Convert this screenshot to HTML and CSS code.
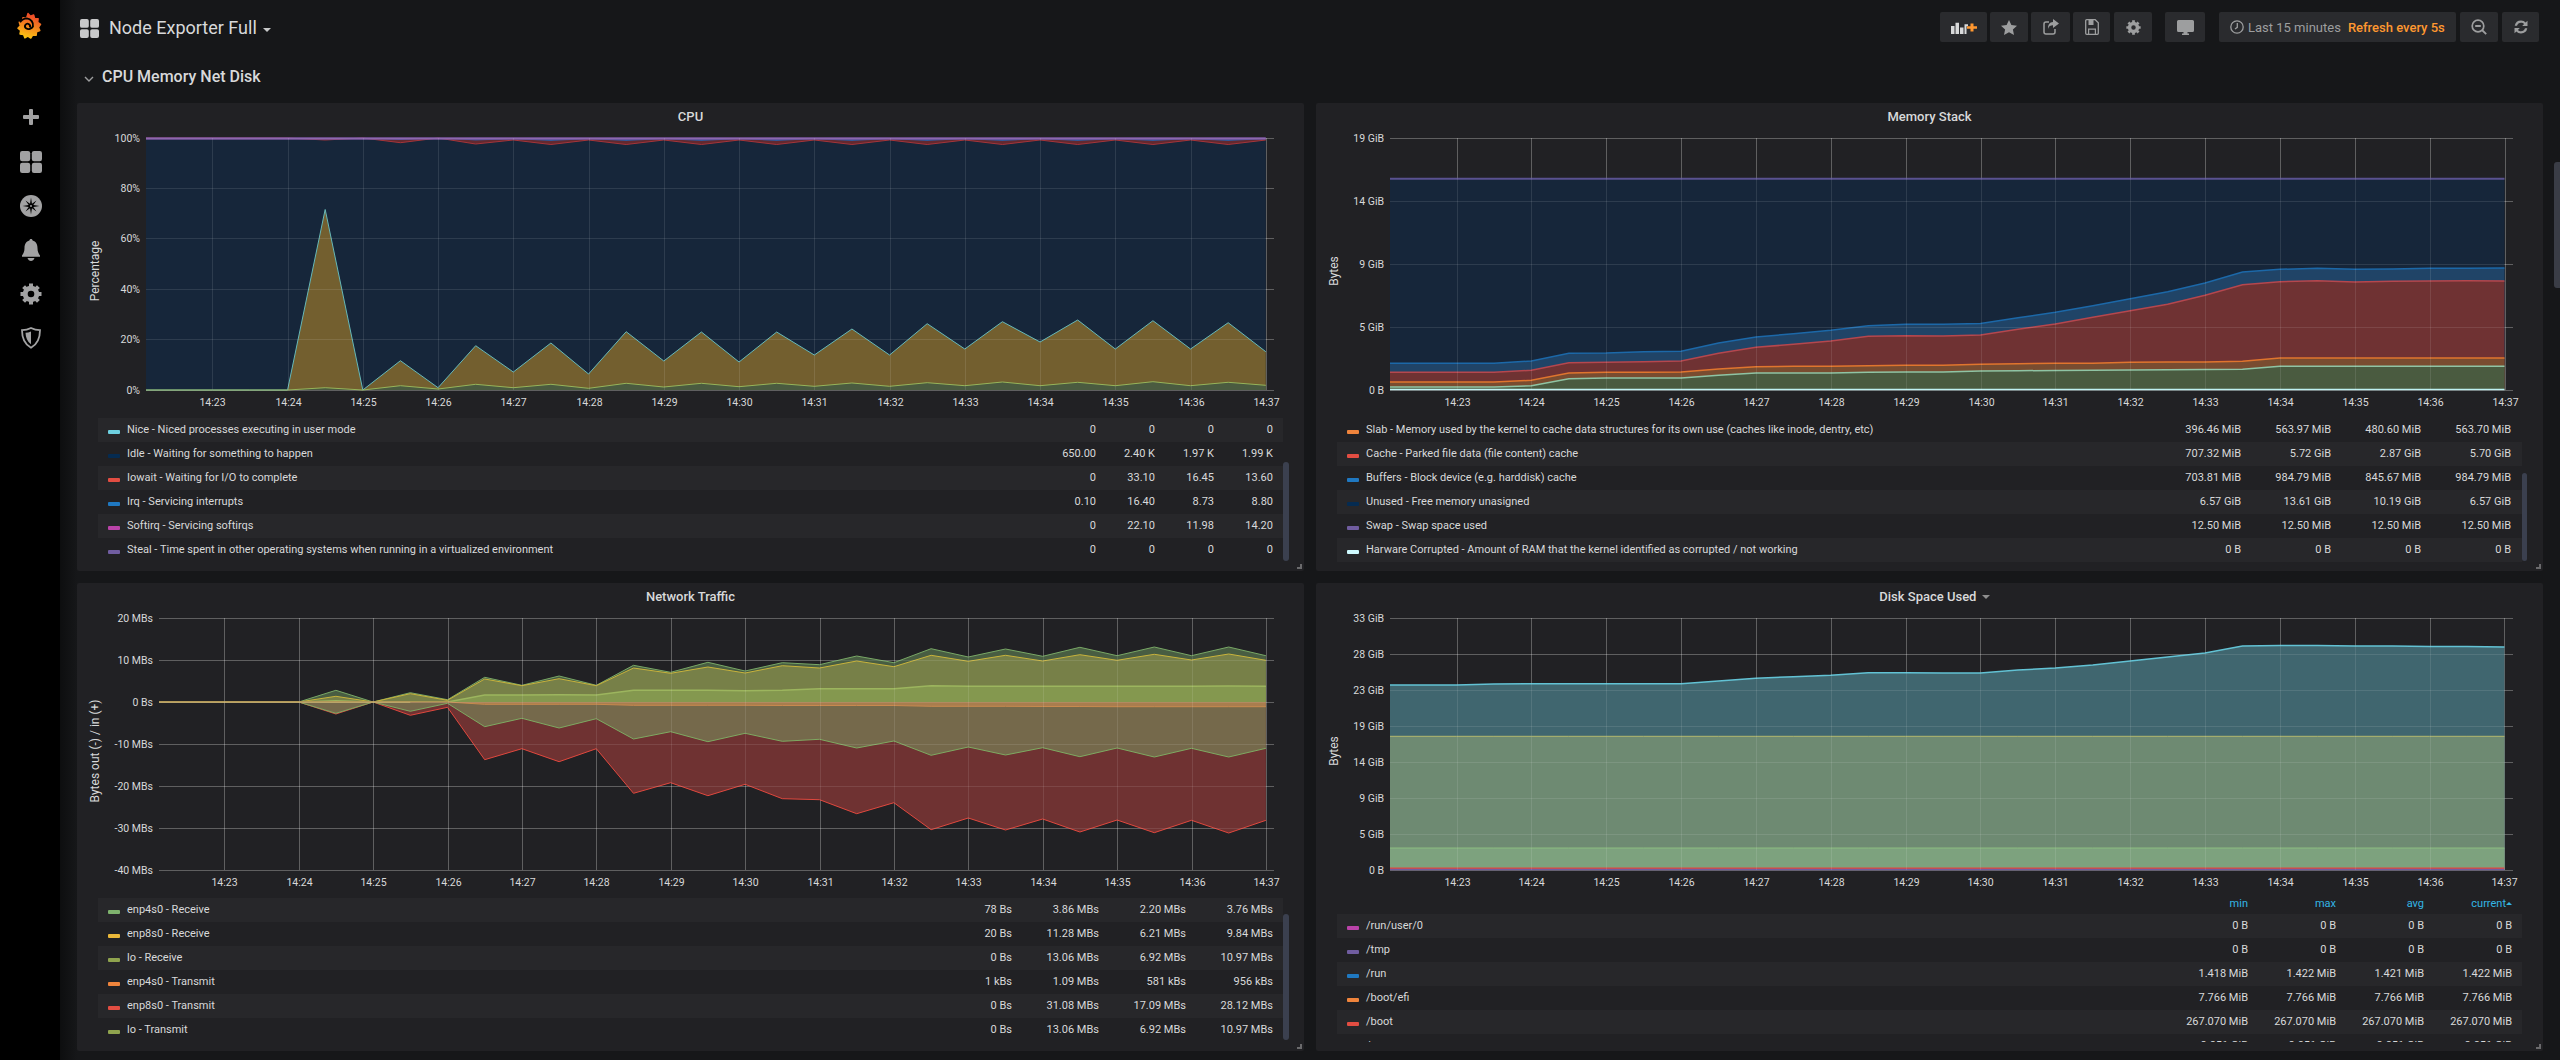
FILE: index.html
```html
<!DOCTYPE html>
<html lang="en">
<head>
<meta charset="utf-8">
<title>Node Exporter Full - Grafana</title>
<link rel="stylesheet" href="styles.css">
</head>
<body>
<svg class="defs" width="0" height="0" aria-hidden="true">
  <defs>
    <linearGradient id="logo-grad" x1="0" y1="1" x2="0.3" y2="0">
      <stop offset="0" stop-color="#fcd20f"/>
      <stop offset="1" stop-color="#ef4e28"/>
    </linearGradient>
    <symbol id="i-grid" viewBox="0 0 22 22"><rect x="0" y="0" width="10.2" height="10.2" rx="2.2"/><rect x="11.8" y="0" width="10.2" height="10.2" rx="2.2"/><rect x="0" y="11.8" width="10.2" height="10.2" rx="2.2"/><rect x="11.8" y="11.8" width="10.2" height="10.2" rx="2.2"/></symbol>
    <symbol id="i-gear" viewBox="0 0 22 22"><circle cx="11" cy="11" r="5.8" fill="none" stroke="currentColor" stroke-width="5"/><path d="M11 .5v4M11 17.5v4M.5 11h4M17.5 11h4M3.6 3.6l2.8 2.8M15.6 15.6l2.8 2.8M3.6 18.4l2.8-2.8M15.6 6.4l2.8-2.8" stroke="currentColor" stroke-width="4" fill="none"/></symbol>
  </defs>
</svg>
<div class="app">
  <nav class="sidebar">
    <a class="side-logo" aria-label="Grafana">
      <svg width="28" height="31" viewBox="0 0 30 32">
        <path fill="url(#logo-grad)" stroke="url(#logo-grad)" stroke-width="1.5" stroke-linejoin="round" d="M15 2l2.600 3 3.500-1.400 1 3.700 3.800.4-.5 3.800 3.100 2.200-2.300 3.100 1.500 3.500-3.500 1.300-.4 3.800-3.800-.2-2 3.200-3.100-2.100-3.300 1.800-1.400-3.500-3.800-.6.700-3.700-2.900-2.500 2.600-2.700-1.200-3.700 3.600-1.100.4-3.800 3.800.5z"/>
        <path fill="none" stroke="#000" stroke-width="2" d="M16.800 17.200a2.700 2.700 0 1 0-3.900.7 5.200 5.200 0 0 0 7.400-1.900 7.300 7.300 0 0 0-6.500-8.700 8.800 8.800 0 0 0-7.300 4.200"/>
      </svg>
    </a>
    <a class="side-item side-plus" aria-label="Create">
      <svg width="16" height="16" viewBox="0 0 16 16"><path d="M6 1a1 1 0 0 1 1-1h2a1 1 0 0 1 1 1v5h5a1 1 0 0 1 1 1v2a1 1 0 0 1-1 1h-5v5a1 1 0 0 1-1 1H7a1 1 0 0 1-1-1v-5H1a1 1 0 0 1-1-1V7a1 1 0 0 1 1-1h5z"/></svg>
    </a>
    <a class="side-item" aria-label="Dashboards"><svg width="22" height="22"><use href="#i-grid"/></svg></a>
    <a class="side-item" aria-label="Explore">
      <svg width="22" height="22" viewBox="0 0 22 22"><circle cx="11" cy="11" r="11"/><path fill="#000" d="M11 2.500L11.960 8.690 16.500 5.500 13.310 10.040 19.500 11 13.310 11.960 16.500 16.500 11.960 13.310 11 19.500 10.040 13.310 5.500 16.500 8.690 11.960 2.500 11 8.690 10.040 5.500 5.500 10.040 8.690z"/><circle cx="11" cy="11" r="1"/></svg>
    </a>
    <a class="side-item" aria-label="Alerting">
      <svg width="18" height="22" viewBox="0 0 18 22"><path d="M9 0c1 0 1.500.7 1.600 1.600C14 2.400 15.500 5.500 15.500 9c0 3.600 1 5.500 2.500 7.500v1.200H0v-1.200C1.500 14.500 2.500 12.600 2.500 9c0-3.500 1.500-6.600 4.900-7.400C7.500.7 8 0 9 0z"/><path d="M5.500 19h7c-.6 1.800-2 3-3.500 3s-2.900-1.200-3.500-3z"/></svg>
    </a>
    <a class="side-item" aria-label="Configuration"><svg width="22" height="22"><use href="#i-gear"/></svg></a>
    <a class="side-item" aria-label="Server admin">
      <svg width="20" height="22" viewBox="0 0 20 22"><path fill="none" stroke="currentColor" stroke-width="1.800" d="M10 1c3 1.600 5.800 2.200 9 2.200 0 7.600-2.600 14-9 17.600C3.600 17.200 1 10.800 1 3.200 4.200 3.200 7 2.600 10 1z"/><path d="M10 4.500c-1.800.8-3.600 1.200-5.500 1.300.2 4.800 1.800 8.900 5.500 11.500z"/></svg>
    </a>
  </nav>

  <main class="main">
    <header class="topbar">
      <div class="dash-title">
        <svg class="dash-icon" width="19" height="19"><use href="#i-grid"/></svg>
        <span class="dash-name">Node Exporter Full</span>
        <span class="caret"></span>
      </div>
      <div class="toolbar">
        <button class="tb tb-add" aria-label="Add panel">
          <svg width="26" height="13" viewBox="0 0 26 16" preserveAspectRatio="none"><path fill="#d8d9da" d="M0 6h3.500v10H0zM4.500 2H8v14H4.500zM9 8h3.500v8H9zM13.500 4H17v2.500h-1.500V16h-2z"/><path fill="#ff9830" d="M19.500 3h3v3.500H26v3h-3.500V13h-3V9.500H16v-3h3.500z"/></svg>
        </button>
        <button class="tb tb-38" aria-label="Star">
          <svg width="16" height="15" viewBox="0 0 16 15"><path d="M8 0l2.400 5 5.600.7-4.100 3.800 1.100 5.500L8 12.300 3 15l1.100-5.500L0 5.700 5.600 5z"/></svg>
        </button>
        <button class="tb tb-39" aria-label="Share">
          <svg width="16" height="16" viewBox="0 0 16 16"><path fill="none" stroke="currentColor" stroke-width="1.500" d="M6 3H3a2 2 0 0 0-2 2v8a2 2 0 0 0 2 2h7a2 2 0 0 0 2-2v-3"/><path d="M10 0l6 4.500L10 9V6.300C7.500 6.300 5.700 7.300 5 10c-.2-4 1.500-6.800 5-7z"/></svg>
        </button>
        <button class="tb tb-37" aria-label="Save">
          <svg width="14" height="16" viewBox="0 0 14 16"><path fill="none" stroke="currentColor" stroke-width="1.300" d="M1.700.7h8.500l3.100 3v10.600a1 1 0 0 1-1 1H1.700a1 1 0 0 1-1-1V1.700a1 1 0 0 1 1-1z"/><path d="M3.500 1h5v5h-5zM3 9.500h8V15H9.800v-4.200H4.200V15H3z"/></svg>
        </button>
        <button class="tb tb-38 tb-nudge" aria-label="Settings"><svg width="15" height="15"><use href="#i-gear"/></svg></button>
        <button class="tb tb-40 tb-group" aria-label="Cycle view mode">
          <svg width="17" height="15" viewBox="0 0 17 15"><path d="M1.500 0h14A1.500 1.500 0 0 1 17 1.500v9a1.500 1.500 0 0 1-1.500 1.500H10.500v1.500H12V15H5v-1.500h1.500V12h-5A1.500 1.500 0 0 1 0 10.500v-9A1.500 1.500 0 0 1 1.500 0z"/></svg>
        </button>
        <button class="tb tb-time">
          <svg width="14" height="14" viewBox="0 0 14 14"><circle cx="7" cy="7" r="6.200" fill="none" stroke="currentColor" stroke-width="1.300"/><path fill="none" stroke="currentColor" stroke-width="1.300" d="M7.300 3v4.300L5 9"/></svg>
          <span>Last 15 minutes</span>
          <span class="refresh">Refresh every 5s</span>
        </button>
        <button class="tb tb-38 tb-nudge" aria-label="Zoom out">
          <svg width="16" height="16" viewBox="0 0 16 16"><circle cx="7" cy="7" r="5.800" fill="none" stroke="currentColor" stroke-width="1.700"/><path fill="none" stroke="currentColor" stroke-width="1.800" d="M4.200 7h5.600M11 11l4.200 4.200"/></svg>
        </button>
        <button class="tb tb-37 tb-nudge" aria-label="Refresh">
          <svg width="16" height="16" viewBox="0 0 16 16"><path d="M8 1.500c2 0 3.500.8 4.600 2L14.500 1.700V7H9.200l1.900-1.900C10.400 4.300 9.300 3.800 8 3.800A4.200 4.200 0 0 0 4 6.700H1.700A6.500 6.500 0 0 1 8 1.500zM8 14.500c-2 0-3.500-.8-4.600-2L1.500 14.300V9h5.300l-1.900 1.900c.7.800 1.800 1.300 3.100 1.300a4.200 4.200 0 0 0 4-2.900h2.300A6.500 6.500 0 0 1 8 14.500z"/></svg>
        </button>
      </div>
    </header>

    <h2 class="row-title"><svg class="chev" width="10" height="6" viewBox="0 0 10 6"><path fill="none" stroke="currentColor" stroke-width="1.400" d="M1 1l4 4 4-4"/></svg>CPU Memory Net Disk</h2>

    <div class="grid">
      <section class="panel">
        <h3 class="panel-title">CPU</h3>
        <svg class="chart" data-chart="cpu"></svg>
        <div class="legend legend-cpu">
          <div class="lrow"><i class="sw" style="background:#6ed0e0"></i><span class="lname">Nice - Niced processes executing in user mode</span><span>0</span><span>0</span><span>0</span><span>0</span></div>
          <div class="lrow"><i class="sw" style="background:#052b51"></i><span class="lname">Idle - Waiting for something to happen</span><span>650.00</span><span>2.40 K</span><span>1.97 K</span><span>1.99 K</span></div>
          <div class="lrow"><i class="sw" style="background:#e24d42"></i><span class="lname">Iowait - Waiting for I/O to complete</span><span>0</span><span>33.10</span><span>16.45</span><span>13.60</span></div>
          <div class="lrow"><i class="sw" style="background:#1f78c1"></i><span class="lname">Irq - Servicing interrupts</span><span>0.10</span><span>16.40</span><span>8.73</span><span>8.80</span></div>
          <div class="lrow"><i class="sw" style="background:#ba43a9"></i><span class="lname">Softirq - Servicing softirqs</span><span>0</span><span>22.10</span><span>11.98</span><span>14.20</span></div>
          <div class="lrow"><i class="sw" style="background:#705da0"></i><span class="lname">Steal - Time spent in other operating systems when running in a virtualized environment</span><span>0</span><span>0</span><span>0</span><span>0</span></div>
          <div class="scroll"></div>
        </div>
        <span class="resize"></span>
      </section>

      <section class="panel">
        <h3 class="panel-title">Memory Stack</h3>
        <svg class="chart" data-chart="mem"></svg>
        <div class="legend legend-mem legend-even">
          <div class="lrow"><i class="sw" style="background:#ef843c"></i><span class="lname">Slab - Memory used by the kernel to cache data structures for its own use (caches like inode, dentry, etc)</span><span>396.46 MiB</span><span>563.97 MiB</span><span>480.60 MiB</span><span>563.70 MiB</span></div>
          <div class="lrow"><i class="sw" style="background:#e24d42"></i><span class="lname">Cache - Parked file data (file content) cache</span><span>707.32 MiB</span><span>5.72 GiB</span><span>2.87 GiB</span><span>5.70 GiB</span></div>
          <div class="lrow"><i class="sw" style="background:#1f78c1"></i><span class="lname">Buffers - Block device (e.g. harddisk) cache</span><span>703.81 MiB</span><span>984.79 MiB</span><span>845.67 MiB</span><span>984.79 MiB</span></div>
          <div class="lrow"><i class="sw" style="background:#052b51"></i><span class="lname">Unused - Free memory unasigned</span><span>6.57 GiB</span><span>13.61 GiB</span><span>10.19 GiB</span><span>6.57 GiB</span></div>
          <div class="lrow"><i class="sw" style="background:#705da0"></i><span class="lname">Swap - Swap space used</span><span>12.50 MiB</span><span>12.50 MiB</span><span>12.50 MiB</span><span>12.50 MiB</span></div>
          <div class="lrow"><i class="sw" style="background:#cffaff"></i><span class="lname">Harware Corrupted - Amount of RAM that the kernel identified as corrupted / not working</span><span>0 B</span><span>0 B</span><span>0 B</span><span>0 B</span></div>
          <div class="scroll scroll-mem"></div>
        </div>
        <span class="resize"></span>
      </section>

      <section class="panel">
        <h3 class="panel-title">Network Traffic</h3>
        <svg class="chart" data-chart="net"></svg>
        <div class="legend legend-net">
          <div class="lrow"><i class="sw" style="background:#7eb26d"></i><span class="lname">enp4s0 - Receive</span><span>78 Bs</span><span>3.86 MBs</span><span>2.20 MBs</span><span>3.76 MBs</span></div>
          <div class="lrow"><i class="sw" style="background:#eab839"></i><span class="lname">enp8s0 - Receive</span><span>20 Bs</span><span>11.28 MBs</span><span>6.21 MBs</span><span>9.84 MBs</span></div>
          <div class="lrow"><i class="sw" style="background:#8fa34e"></i><span class="lname">lo - Receive</span><span>0 Bs</span><span>13.06 MBs</span><span>6.92 MBs</span><span>10.97 MBs</span></div>
          <div class="lrow"><i class="sw" style="background:#ef843c"></i><span class="lname">enp4s0 - Transmit</span><span>1 kBs</span><span>1.09 MBs</span><span>581 kBs</span><span>956 kBs</span></div>
          <div class="lrow"><i class="sw" style="background:#e24d42"></i><span class="lname">enp8s0 - Transmit</span><span>0 Bs</span><span>31.08 MBs</span><span>17.09 MBs</span><span>28.12 MBs</span></div>
          <div class="lrow"><i class="sw" style="background:#8fa34e"></i><span class="lname">lo - Transmit</span><span>0 Bs</span><span>13.06 MBs</span><span>6.92 MBs</span><span>10.97 MBs</span></div>
          <div class="scroll scroll-net"></div>
        </div>
        <span class="resize"></span>
      </section>

      <section class="panel">
        <h3 class="panel-title panel-title-menu">Disk Space Used <span class="caret caret-sm"></span></h3>
        <svg class="chart chart-short" data-chart="disk"></svg>
        <div class="legend legend-disk">
          <div class="lhead"><span></span><span></span><span>min</span><span>max</span><span>avg</span><span>current<b class="sort"></b></span></div>
          <div class="lrow"><i class="sw" style="background:#ba43a9"></i><span class="lname">/run/user/0</span><span>0 B</span><span>0 B</span><span>0 B</span><span>0 B</span></div>
          <div class="lrow"><i class="sw" style="background:#705da0"></i><span class="lname">/tmp</span><span>0 B</span><span>0 B</span><span>0 B</span><span>0 B</span></div>
          <div class="lrow"><i class="sw" style="background:#1f78c1"></i><span class="lname">/run</span><span>1.418 MiB</span><span>1.422 MiB</span><span>1.421 MiB</span><span>1.422 MiB</span></div>
          <div class="lrow"><i class="sw" style="background:#ef843c"></i><span class="lname">/boot/efi</span><span>7.766 MiB</span><span>7.766 MiB</span><span>7.766 MiB</span><span>7.766 MiB</span></div>
          <div class="lrow"><i class="sw" style="background:#e24d42"></i><span class="lname">/boot</span><span>267.070 MiB</span><span>267.070 MiB</span><span>267.070 MiB</span><span>267.070 MiB</span></div>
          <div class="lrow"><i class="sw" style="background:#7eb26d"></i><span class="lname">/</span><span>8.851 GiB</span><span>8.851 GiB</span><span>8.851 GiB</span><span>8.851 GiB</span></div>
          <div class="scroll scroll-disk"></div>
        </div>
        <span class="resize"></span>
      </section>
    </div>
  </main>
  <div class="page-scroll"></div>
</div>
<script src="charts.js"></script>
</body>
</html>
```
FILE: styles.css
```css
* { box-sizing: border-box; }
html, body { margin: 0; height: 100%; overflow: hidden; background: #161719; }
body { font-family: Roboto, "Liberation Sans", sans-serif; color: #d8d9da; font-size: 12px; }
.defs { position: absolute; }
.app { display: flex; height: 1060px; position: relative; }

.sidebar { width: 60px; flex: none; background: #000; display: flex; flex-direction: column; align-items: center; color: #a2a2a3; fill: #a2a2a3; }
.side-logo { height: 94px; display: flex; padding-top: 11px; justify-content: center; width: 100%; padding-right: 4px; }
.side-item { height: 44px; width: 100%; display: flex; align-items: center; justify-content: center; padding-left: 2px; }
.side-plus { height: 46px; }

.main { flex: 1; min-width: 0; padding: 12px 17px 0; background: linear-gradient(90deg, #0d0e0f 0, #161719 17px); }
.topbar { display: flex; align-items: center; justify-content: space-between; height: 30px; padding: 0 4px 0 3px; }
.dash-title { display: flex; align-items: center; font-size: 18px; color: #d8d9da; padding-top: 2px; }
.dash-icon { fill: #c8c9ca; margin-right: 10px; }
.dash-name { line-height: 20px; }
.caret { width: 0; height: 0; border: 4px solid transparent; border-top-color: #c8c9ca; border-bottom: 0; margin: 3px 0 0 6px; display: inline-block; }
.caret-sm { vertical-align: 2px; margin: 0 0 0 2px; border-top-color: #8e8e8e; }

.toolbar { display: flex; gap: 3px; }
.tb { height: 30px; border: 0; border-radius: 2px; background: #2a2b2e; color: #9d9e9f; fill: #9d9e9f; padding: 0; display: flex; align-items: center; justify-content: center; font: 13px Roboto, sans-serif; }
.tb-add { width: 47px; }
.tb-37 { width: 37px; }
.tb-38 { width: 38px; }
.tb-39 { width: 39px; }
.tb-40 { width: 40px; }
.tb-nudge { margin-left: 1px; }
.tb-group { margin-left: 10px; }
.tb-time { width: 237px; gap: 4px; justify-content: flex-start; padding-left: 11px; margin-left: 11px; }
.refresh { color: #ff9830; font-weight: 500; margin-left: 3px; }

.row-title { margin: 0; font-size: 16px; font-weight: 500; line-height: 20px; padding: 25px 0 16px 7px; color: #d8d9da; display: flex; align-items: center; }
.chev { margin-right: 8px; margin-top: 3px; color: #9d9e9f; }

.grid { display: grid; grid-template-columns: 1227px 1227px; grid-auto-rows: 468px; gap: 12px; }
.panel { position: relative; background: #212124; border-radius: 2px; overflow: hidden; }
.panel-title { margin: 0; height: 28px; font-size: 13px; line-height: 28px; font-weight: 500; text-align: center; color: #d8d9da; }
.panel-title-menu { padding-left: 10px; }
.chart { display: block; width: 1227px; height: 287px; }
.chart-short { height: 283px; }
.chart text { font: 10.5px Roboto, sans-serif; fill: #d8d9da; }
.chart text.axis-label { font-size: 12px; }

.legend { position: relative; margin: 0 21px; height: 144px; font-size: 11px; }
.legend-disk { height: 148px; overflow: hidden; }
.lrow, .lhead { display: grid; height: 24px; align-items: center; text-align: right; padding: 0 10px 1px 0; }
.lhead { height: 20px; color: #33b5e5; }
.lrow:nth-of-type(odd) { background: #27272a; }
.legend-even .lrow:nth-of-type(odd) { background: transparent; }
.legend-even .lrow:nth-of-type(even) { background: #27272a; }
.legend-disk .lrow:nth-of-type(odd) { background: transparent; }
.legend-disk .lrow:nth-of-type(even) { background: #27272a; }
.legend-cpu .lrow, .legend-cpu .lhead { grid-template-columns: 29px 1fr 59px 59px 59px 59px; }
.legend-mem .lrow { grid-template-columns: 29px 1fr 90px 90px 90px 90px; padding-right: 11px; }
.legend-net .lrow { grid-template-columns: 29px 1fr 66px 87px 87px 87px; }
.legend-disk .lrow, .legend-disk .lhead { grid-template-columns: 29px 1fr 88px 88px 88px 88px; }
.lname { text-align: left; white-space: nowrap; }
.sw { display: block; width: 12px; height: 4px; border-radius: 1px; margin: 4px 0 0 10px; }
.sort { display: inline-block; width: 0; height: 0; border: 3px solid transparent; border-bottom: 3px solid #33b5e5; border-top: 0; margin-left: 0; vertical-align: 2px; }
.scroll { position: absolute; right: -6px; top: 44px; width: 6px; height: 99px; border-radius: 3px; background: #3b404f; }
.scroll-mem { top: 55px; height: 88px; right: -5px; width: 5px; }
.scroll-net { top: 16px; height: 126px; }
.scroll-disk { top: 5px; height: 99px; right: -5px; width: 5px; }
.resize { position: absolute; right: 2px; bottom: 2px; width: 5px; height: 5px; border-right: 2px solid #6a6a6c; border-bottom: 2px solid #6a6a6c; }
.page-scroll { position: absolute; right: 0; top: 162px; width: 6px; height: 126px; border-radius: 3px 0 0 3px; background: #3a3d46; }
```
FILE: charts.js
```js
const L = (y, n) => Array(n || 29).fill(y);
const CHARTS = {
  cpu: {
    box: [77, 131], left: 146, x23: 212.3, step: 75.25, end: 1274, top: 138, bottom: 390,
    yticks: [['100%', 138], ['80%', 188], ['60%', 238], ['40%', 289], ['20%', 339], ['0%', 390]],
    title: ['Percentage', 95, 271], labelY: 406,
    layers: [
      { y: L(138), fill: '#16263a' },
      { y: [390,390,390,209.5,390,360.7,387.7,345.7,372,343,374,331.7,361,332,362,332,355,329,355,323.7,349,321.7,342,320,349,320.7,349,322.7,351.7], fill: '#735f2f', line: '#66b8b8' },
      { y: [390,390,390,387.7,390,385.7,389,384.3,387.7,384.3,388.3,383.3,387,383.3,386.7,383.3,386.3,383,386.3,382.7,385.7,382,385.7,382.3,385.7,381.7,385.7,382.3,385.3], fill: '#4a5b40', line: '#96b45a' },
      { y: [138,138,138,140,138,142.7,138,144,140,144.5,140,144.5,140,144.5,140,144.5,140,144.5,140,144.5,140,144.5,140,144.5,140,144.5,140,144.5,140], base: 138, fill: '#63292f', line: '#a5353a' },
      { y: [138,138,138,139,138,140,138,140.5,139,141,139,141,139,141,139,141,139,141,139,141,139,141,139,141,139,141,139,141,139], base: 138, fill: '#33599a' },
      { y: L(138.5), line: '#7f58a4', width: 2.5, nofill: true }
    ]
  },
  mem: {
    box: [1316, 131], left: 1390, x23: 1456.6, step: 74.85, end: 2513, top: 138, bottom: 390,
    yticks: [['19 GiB', 138], ['14 GiB', 201], ['9 GiB', 264], ['5 GiB', 327], ['0 B', 390]],
    title: ['Bytes', 1334, 271], labelY: 406,
    layers: [
      { y: L(178.7), fill: '#16263a', line: '#5a5290', width: 2 },
      { y: [363.3,363.3,361,353.3,353,351.7,351.3,343,337,333.7,330.3,325.7,324.3,324.3,323.5,317.7,312.3,305.7,298.7,291.7,283,272,269.3,268.3,269.3,269,268.3,268.3,268], fill: '#204467', line: '#1c68a8', width: 1.5 },
      { y: [372.3,372.3,370.3,362.7,362.3,361.7,361,353.3,347.3,344.3,341,336.3,335.7,336,335,329.3,324,317.3,310.7,304.3,295.3,284.7,281.7,280.7,282,281.3,281,280.7,281], fill: '#6f3233', line: '#b5474e', width: 1.5 },
      { y: [382,382,380.3,373,372.3,372.3,372,369,366.7,366.3,366.3,365.7,365.3,365.3,364.3,363.7,363.3,363.3,362.3,362,362,361.3,358,358,358,358,358,358,358], fill: '#794c30', line: '#e0752e', width: 1.5 },
      { y: [387,387,385.7,378.7,378,378,378,375.3,373,373,373,372.3,372,372,371,370.7,370.5,370.3,370,369.7,369.5,369.3,366.3,366.3,366.3,366.3,366.3,366.3,366.3], fill: '#4a5b40', line: '#8fc4a4', width: 1.5 },
      { y: L(389.5), line: '#bff2f2', width: 1.5, nofill: true }
    ]
  },
  net: {
    box: [77, 611], left: 159, x23: 224.3, step: 74.4, end: 1274, top: 618, bottom: 870,
    yticks: [['20 MBs', 618], ['10 MBs', 660], ['0 Bs', 702], ['-10 MBs', 744], ['-20 MBs', 786], ['-30 MBs', 828], ['-40 MBs', 870]],
    title: ['Bytes out (-) / in (+)', 95, 751], labelY: 886,
    layers: [
      { y: [702,702,702,690.3,702,692.7,699.7,677.3,685.3,676,685.3,665.3,672.3,662.3,671,662.7,664.7,656,662.7,648.7,657,649,656.3,647.3,655.7,647,655.7,647,655.7], base: 702, fill: '#485d42', line: '#79a866' },
      { y: [702,702,702,696.3,702,693.7,700.3,679,685.7,678.7,685.7,668,673.3,667,673,665.7,668,661,666.7,655.3,661.3,655.3,661,654.7,660.3,654.3,660,654,660.3], base: 702, fill: '#778048', line: '#c9b33c' },
      { y: [702,702,702,700.7,702,702,702,695,695,694.7,695,690.3,690.3,690.3,690.7,690.3,688.7,688.7,688.7,685.7,686.3,686.3,686.3,686.3,686.3,686.3,686.3,686,686.3], base: 702, fill: '#84984f', line: '#9cb55e', width: 1.5 },
      { y: [702,702,702,714,702,715.3,707.3,759.7,748.7,761.7,748.7,793.3,782.7,795.7,784.3,798.7,799.7,813.7,802.7,829.7,818,830,819,832,820,832.7,820.3,833,820.3], base: 702, fill: '#6f3232', line: '#e0483e' },
      { y: [702,702,702,713.3,702,711.3,703.3,726.7,718.3,728,718.7,739,731.7,741.7,733.3,741.3,739.3,748,741,755.3,747,755,747.7,756.7,748,757,748.3,757,748.3], base: 702, fill: '#75694b', line: '#7eaa62' },
      { y: [702,702,702,702,702,702,702,704.3,704.3,704.3,704.3,705.3,705.3,705.3,705.3,705.5,705.5,705.5,705.5,706.3,706.3,706.3,706.5,706.5,706.7,706.7,706.7,706.7,706.7], base: 702, fill: '#a97d4e', line: '#c88a4e' },
      { y: L(702), line: '#b39a58', width: 2, nofill: true, upto: 447 }
    ]
  },
  disk: {
    box: [1316, 611], left: 1390, x23: 1456.5, step: 74.85, end: 2513, top: 618, bottom: 870, short: true,
    yticks: [['33 GiB', 618], ['28 GiB', 654], ['23 GiB', 690], ['19 GiB', 726], ['14 GiB', 762], ['9 GiB', 798], ['5 GiB', 834], ['0 B', 870]],
    title: ['Bytes', 1334, 751], labelY: 886,
    layers: [
      { y: [685,684,683.7,683.7,683.7,683.7,683.7,681,678.3,676.7,675.3,672.7,672.7,673,673,670,668,665,661,657,653,646,645.5,645.5,646,646,646.5,646.5,647], fill: '#40666f', line: '#62c2d4', width: 1.5 },
      { y: L(736.3), fill: '#6e8a72', line: '#b4b86e', width: 1 },
      { y: L(848), fill: '#7da27e', line: '#8cbd80', width: 1 },
      { y: L(868.3), line: '#e0483e', width: 1.5, nofill: true },
      { y: L(869.6), line: '#705da0', width: 1.5, nofill: true }
    ]
  }
};

const NS = 'http://www.w3.org/2000/svg';
function el(parent, name, attrs, text) {
  const e = document.createElementNS(NS, name);
  for (const k in attrs) e.setAttribute(k, attrs[k]);
  if (text) e.textContent = text;
  parent.appendChild(e);
  return e;
}

function gridLines(svg, c, alpha) {
  const attrs = { stroke: `rgba(255,255,255,${alpha})`, 'stroke-width': 1, 'shape-rendering': 'crispEdges' };
  c.yticks.forEach(([, y]) => {
    el(svg, 'line', Object.assign({ x1: c.left, x2: c.end, y1: y + .5, y2: y + .5 }, attrs));
  });
  for (let m = 0; m <= 14; m++) {
    const x = Math.round(c.x23 + m * c.step) + .5;
    el(svg, 'line', Object.assign({ x1: x, x2: x, y1: c.top, y2: c.bottom }, attrs));
  }
}

document.querySelectorAll('svg[data-chart]').forEach(svg => {
  const c = CHARTS[svg.dataset.chart];
  const h = c.short ? 283 : 287;
  svg.setAttribute('viewBox', `${c.box[0]} ${c.box[1]} 1227 ${h}`);
  const xAt = i => c.x23 + i * c.step / 2;
  const right = xAt(28);

  gridLines(svg, c, .2);

  c.layers.forEach(l => {
    const pts = [[c.left, l.y[0]]].concat(l.y.map((y, i) => [xAt(i), y]));
    const line = pts.filter(p => !l.upto || p[0] <= l.upto).map(p => p.join(',')).join(' ');
    const base = l.base === undefined ? c.bottom : l.base;
    if (!l.nofill) {
      el(svg, 'polygon', { points: `${c.left},${base} ${line} ${right},${base}`, fill: l.fill });
    }
    if (l.line) {
      el(svg, 'polyline', { points: line, fill: 'none', stroke: l.line, 'stroke-width': l.width || 1 });
    }
  });

  gridLines(svg, c, .1);

  c.yticks.forEach(([label, y]) => {
    el(svg, 'text', { x: c.left - 6, y: y + 4, 'text-anchor': 'end' }, label);
  });
  for (let m = 0; m <= 14; m++) {
    const x = Math.round(c.x23 + m * c.step) + .5;
    el(svg, 'text', { x, y: c.labelY, 'text-anchor': 'middle' }, '14:' + (23 + m));
  }
  const [t, tx, ty] = c.title;
  el(svg, 'text', { class: 'axis-label', x: tx, y: ty, 'text-anchor': 'middle', transform: `rotate(-90 ${tx} ${ty})`, 'dominant-baseline': 'central' }, t);
});
```
